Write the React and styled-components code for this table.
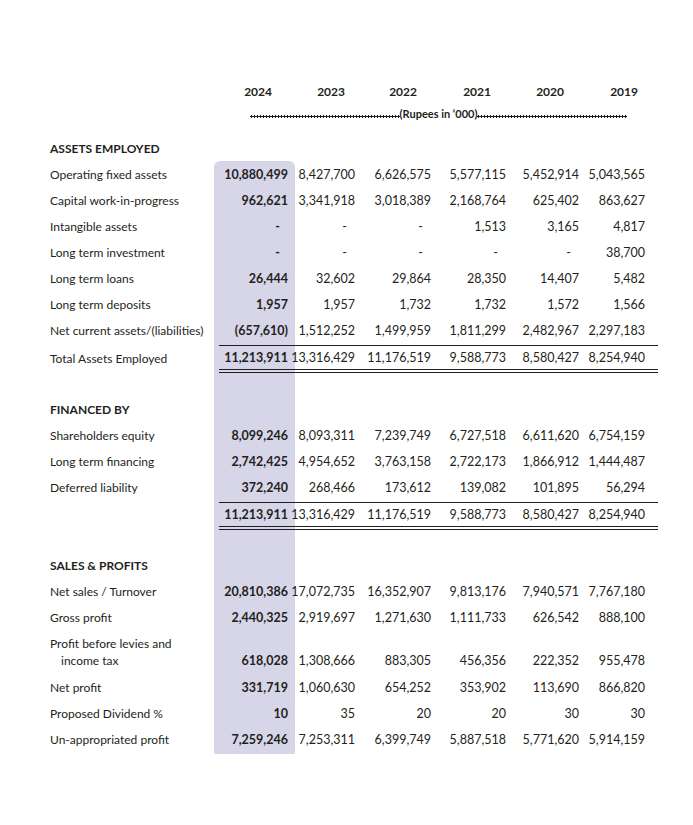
import styled, { createGlobalStyle } from 'styled-components';

const GlobalStyle = createGlobalStyle`
  body {
    margin: 0;
    background: #ffffff;
    font-family: Lato, "Open Sans", sans-serif;
    color: #231f20;
  }
`;

const COLS = '164px 81px 67px 76px 75px 73px 72px';
const BAND = '#d7d5e8';

const Page = styled.div`
  width: 693px;
  min-height: 825px;
  padding: 78px 0 0 50px;
  box-sizing: border-box;
`;

const Row = styled.div`
  display: grid;
  grid-template-columns: ${COLS};
  height: ${props => props.$h || 26}px;
  font-size: 12.5px;
`;

const Label = styled.div`
  display: flex;
  flex-direction: column;
  justify-content: center;
  line-height: 17px;
  white-space: nowrap;
  font-size: 12px;
  font-weight: ${props => props.$bold ? 700 : 400};
`;

const Indent = styled.span`
  padding-left: 11px;
`;

const Cell = styled.div`
  display: flex;
  flex-direction: column;
  background: ${props => props.$band ? BAND : 'transparent'};
  padding-left: ${props => props.$band && props.$total ? 5 : 0}px;
  padding-top: ${props => props.$total ? 2 : 0}px;
  border-radius: ${props => props.$round === 'top' ? '6px 6px 0 0' : props.$round === 'bottom' ? '0 0 6px 6px' : '0'};
`;

const Num = styled.div`
  flex: 1;
  display: flex;
  justify-content: flex-end;
  align-items: ${props => props.$tall ? 'flex-end' : 'center'};
  padding-bottom: ${props => props.$tall ? 5 : 0}px;
  padding-right: ${props => props.$last ? 13 : 7}px;
  line-height: 17px;
  font-weight: ${props => props.$bold ? 700 : 400};
  border-top: ${props => props.$total ? '1px solid #231f20' : 'none'};
  border-bottom: ${props => props.$total ? '4px double #231f20' : 'none'};
`;

const Dash = styled.span`
  margin-right: 8px;
`;

const Year = styled.div`
  display: flex;
  align-items: center;
  justify-content: flex-end;
  padding-right: ${props => props.$pr}px;
  font-weight: 700;
  font-size: 12px;
`;

const Units = styled.div`
  grid-column: 2 / -1;
  display: flex;
  align-items: center;
  padding: 0 31px 0 36px;
  font-size: 11px;
  font-weight: 700;
  white-space: nowrap;
`;

const Dots = styled.span`
  flex: 1;
  height: 3px;
  margin-top: 7px;
  background-image: radial-gradient(circle, #231f20 1px, transparent 1.3px);
  background-size: 3px 3px;
  background-repeat: repeat-x;
`;

const years = [['2024', 23], ['2023', 17], ['2022', 21], ['2021', 22], ['2020', 22], ['2019', 20]];

const sections = [
  {
    title: 'ASSETS EMPLOYED',
    rows: [
      ['Operating fixed assets', '10,880,499', '8,427,700', '6,626,575', '5,577,115', '5,452,914', '5,043,565'],
      ['Capital work-in-progress', '962,621', '3,341,918', '3,018,389', '2,168,764', '625,402', '863,627'],
      ['Intangible assets', '-', '-', '-', '1,513', '3,165', '4,817'],
      ['Long term investment', '-', '-', '-', '-', '-', '38,700'],
      ['Long term loans', '26,444', '32,602', '29,864', '28,350', '14,407', '5,482'],
      ['Long term deposits', '1,957', '1,957', '1,732', '1,732', '1,572', '1,566'],
      ['Net current assets/(liabilities)', '(657,610)', '1,512,252', '1,499,959', '1,811,299', '2,482,967', '2,297,183'],
    ],
    total: ['Total Assets Employed', '11,213,911', '13,316,429', '11,176,519', '9,588,773', '8,580,427', '8,254,940'],
  },
  {
    title: 'FINANCED BY',
    gapBefore: 23,
    rows: [
      ['Shareholders equity', '8,099,246', '8,093,311', '7,239,749', '6,727,518', '6,611,620', '6,754,159'],
      ['Long term financing', '2,742,425', '4,954,652', '3,763,158', '2,722,173', '1,866,912', '1,444,487'],
      ['Deferred liability', '372,240', '268,466', '173,612', '139,082', '101,895', '56,294'],
    ],
    total: ['', '11,213,911', '13,316,429', '11,176,519', '9,588,773', '8,580,427', '8,254,940'],
  },
  {
    title: 'SALES & PROFITS',
    gapBefore: 22,
    rows: [
      ['Net sales / Turnover', '20,810,386', '17,072,735', '16,352,907', '9,813,176', '7,940,571', '7,767,180'],
      ['Gross profit', '2,440,325', '2,919,697', '1,271,630', '1,111,733', '626,542', '888,100'],
      [['Profit before levies and', 'income tax'], '618,028', '1,308,666', '883,305', '456,356', '222,352', '955,478'],
      ['Net profit', '331,719', '1,060,630', '654,252', '353,902', '113,690', '866,820'],
      ['Proposed Dividend %', '10', '35', '20', '20', '30', '30'],
      ['Un-appropriated profit', '7,259,246', '7,253,311', '6,399,749', '5,887,518', '5,771,620', '5,914,159'],
    ],
  },
];

const Value = ({ v }) => (v === '-' ? <Dash>-</Dash> : v);

const DataRow = ({ row, total, round }) => {
  const [label, ...values] = row;
  const tall = Array.isArray(label);
  return (
    <Row $h={tall ? 44 : total ? 30 : 26}>
      <Label>
        {tall ? (
          <>
            <span>{label[0]}</span>
            <Indent>{label[1]}</Indent>
          </>
        ) : label}
      </Label>
      {values.map((v, i) => (
        <Cell key={i} $band={i === 0} $total={total} $round={i === 0 ? round : undefined}>
          <Num $bold={i === 0} $total={total} $tall={tall} $last={i === values.length - 1}>
            <Value v={v} />
          </Num>
        </Cell>
      ))}
    </Row>
  );
};

const BandGap = ({ h, round, children }) => (
  <Row $h={h}>
    <Label $bold>{children}</Label>
    <Cell $band $round={round} />
  </Row>
);

const App = () => (
  <>
    <GlobalStyle />
    <Page>
      <Row>
        <Label />
        {years.map(([y, pr]) => (
          <Year key={y} $pr={pr}>{y}</Year>
        ))}
      </Row>
      <Row $h={18}>
        <Label />
        <Units>
          <Dots />
          (Rupees in ‘000)
          <Dots />
        </Units>
      </Row>
      <Row $h={13} />
      {sections.map((s, si) => (
        <div key={s.title}>
          {si === 0 ? (
            <Row>
              <Label $bold>{s.title}</Label>
            </Row>
          ) : (
            <>
              <BandGap h={s.gapBefore} />
              <BandGap h={26}>{s.title}</BandGap>
            </>
          )}
          {s.rows.map((r, ri) => (
            <DataRow key={ri} row={r} round={si === 0 && ri === 0 ? 'top' : undefined} />
          ))}
          {s.total && <DataRow row={s.total} total />}
        </div>
      ))}
      <BandGap h={2} round="bottom" />
    </Page>
  </>
);

export default App;
